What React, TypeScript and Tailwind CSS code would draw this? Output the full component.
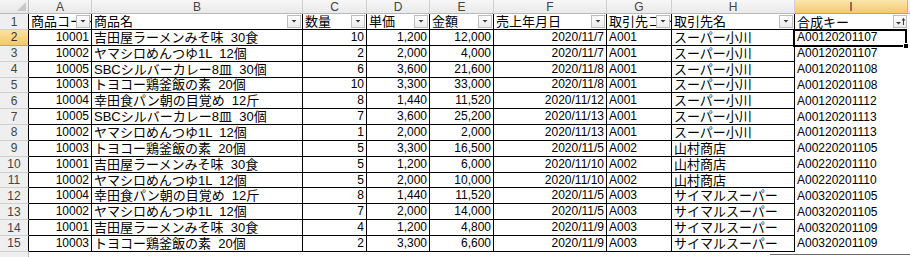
import * as React from "react";

const GRID =
  "grid grid-cols-[29px_63px_211px_64px_63px_64px_113px_65px_123px_113px_1fr]";

const LETTERS = ["A", "B", "C", "D", "E", "F", "G", "H", "I"];

const HEADERS = [
  "商品コード",
  "商品名",
  "数量",
  "単価",
  "金額",
  "売上年月日",
  "取引先コード",
  "取引先名",
  "合成キー",
];

// true = right aligned (numbers)
const RIGHT = [true, false, true, true, true, true, false, false, false];

const ROWS: string[][] = [
  ["10001", "吉田屋ラーメンみそ味  30食", "10", "1,200", "12,000", "2020/11/7", "A001", "スーパー小川", "A00120201107"],
  ["10002", "ヤマシロめんつゆ1L  12個", "2", "2,000", "4,000", "2020/11/7", "A001", "スーパー小川", "A00120201107"],
  ["10005", "SBCシルバーカレー8皿  30個", "6", "3,600", "21,600", "2020/11/8", "A001", "スーパー小川", "A00120201108"],
  ["10003", "トヨコー鶏釜飯の素  20個", "10", "3,300", "33,000", "2020/11/8", "A001", "スーパー小川", "A00120201108"],
  ["10004", "幸田食パン朝の目覚め  12斤", "8", "1,440", "11,520", "2020/11/12", "A001", "スーパー小川", "A00120201112"],
  ["10005", "SBCシルバーカレー8皿  30個", "7", "3,600", "25,200", "2020/11/13", "A001", "スーパー小川", "A00120201113"],
  ["10002", "ヤマシロめんつゆ1L  12個", "1", "2,000", "2,000", "2020/11/13", "A001", "スーパー小川", "A00120201113"],
  ["10003", "トヨコー鶏釜飯の素  20個", "5", "3,300", "16,500", "2020/11/5", "A002", "山村商店", "A00220201105"],
  ["10001", "吉田屋ラーメンみそ味  30食", "5", "1,200", "6,000", "2020/11/10", "A002", "山村商店", "A00220201110"],
  ["10002", "ヤマシロめんつゆ1L  12個", "5", "2,000", "10,000", "2020/11/10", "A002", "山村商店", "A00220201110"],
  ["10004", "幸田食パン朝の目覚め  12斤", "8", "1,440", "11,520", "2020/11/5", "A003", "サイマルスーパー", "A00320201105"],
  ["10002", "ヤマシロめんつゆ1L  12個", "7", "2,000", "14,000", "2020/11/5", "A003", "サイマルスーパー", "A00320201105"],
  ["10001", "吉田屋ラーメンみそ味  30食", "4", "1,200", "4,800", "2020/11/9", "A003", "サイマルスーパー", "A00320201109"],
  ["10003", "トヨコー鶏釜飯の素  20個", "2", "3,300", "6,600", "2020/11/9", "A003", "サイマルスーパー", "A00320201109"],
];

function FilterButton({ sorted }: { sorted?: boolean }) {
  return (
    <span className="absolute right-[1px] top-[1px] flex h-[13px] w-[14px] items-center justify-center border border-[#bdbdbd] bg-gradient-to-b from-[#ffffff] to-[#ebebeb]">
      {sorted ? (
        <svg width="12" height="11" viewBox="0 0 12 11">
          <polygon points="2,6 7,6 4.5,8.5" fill="#3c3c3c" />
          <line x1="9.5" y1="2.5" x2="9.5" y2="9" stroke="#3c3c3c" strokeWidth="1" />
          <polygon points="7.5,4.5 9.5,2 11.5,4.5" fill="#3c3c3c" />
        </svg>
      ) : (
        <svg width="12" height="11" viewBox="0 0 12 11">
          <polygon points="3.5,4 8.5,4 6,6.5" fill="#3c3c3c" />
        </svg>
      )}
    </span>
  );
}

function ColumnHeader() {
  return (
    <div className={`${GRID} h-[14px]`}>
      <div className="relative border-r border-b border-[#b9b9b9] bg-gradient-to-b from-[#f5f5f5] to-[#e7e7e7]">
        <svg className="absolute bottom-[2px] right-[2px]" width="9" height="9" viewBox="0 0 9 9">
          <polygon points="9,0 9,9 0,9" fill="#c8c8c8" />
        </svg>
      </div>
      {LETTERS.map((l) =>
        l === "I" ? (
          <div
            key={l}
            className="flex items-center justify-center border-r border-b border-r-[#e0b060] border-b-[#e69b2e] bg-gradient-to-b from-[#fbe6ae] to-[#f4c96a] text-[12px] leading-none text-[#333]"
          >
            {l}
          </div>
        ) : (
          <div
            key={l}
            className="flex items-center justify-center border-r border-b border-r-[#cfcfcf] border-b-[#b9b9b9] bg-gradient-to-b from-[#f7f7f7] to-[#e9e9e9] text-[12px] leading-none text-[#444]"
          >
            {l}
          </div>
        )
      )}
      <div className="border-b border-[#b9b9b9] bg-gradient-to-b from-[#f7f7f7] to-[#e9e9e9]" />
    </div>
  );
}

function RowHeader({ n, active }: { n: number; active?: boolean }) {
  return (
    <div
      className={
        active
          ? "flex items-center justify-center border-r border-b border-r-black border-b-[#e69b2e] bg-gradient-to-b from-[#fbe2a2] to-[#f5c865] text-[12px] leading-none text-[#333]"
          : "flex items-center justify-center border-r border-b border-r-black border-b-[#cfcfcf] bg-[#efefef] text-[12px] leading-none text-[#444]"
      }
    >
      {n}
    </div>
  );
}

function TitleRow() {
  return (
    <div className={`${GRID} h-[16px]`}>
      <RowHeader n={1} />
      {HEADERS.map((h, i) => (
        <div
          key={h}
          className={
            i === 8
              ? "relative flex items-center overflow-hidden pl-[2px]"
              : "relative flex items-center overflow-hidden border-r border-b border-black pl-[2px]"
          }
        >
          <span className="min-w-0 overflow-hidden whitespace-nowrap text-[13px] leading-[15px]">{h}</span>
          <FilterButton sorted={i === 8} />
        </div>
      ))}
      <div />
    </div>
  );
}

function DataRow({ row, n }: { row: string[]; n: number }) {
  const active = n === 2;
  return (
    <div className={`${GRID} h-[15.85px]`}>
      <RowHeader n={n} active={active} />
      {row.map((v, i) => {
        const big = i === 1 || i === 7;
        const size = big ? "text-[13px]" : "text-[12px]";
        if (i === 8) {
          return (
            <div key={i} className="relative flex items-center overflow-visible pl-[2px]">
              <span className={`whitespace-pre ${size} leading-[15px]`}>{v}</span>
              {active && (
                <>
                  <span className="pointer-events-none absolute -left-[2px] -top-[1px] bottom-[-1px] right-[1px] border-2 border-black" />
                  <span className="absolute bottom-[-3px] right-[-1px] h-[6px] w-[6px] border border-white bg-black" />
                </>
              )}
            </div>
          );
        }
        return (
          <div
            key={i}
            className={
              RIGHT[i]
                ? "flex items-center justify-end overflow-hidden border-r border-b border-black pr-[2px]"
                : "flex items-center overflow-hidden border-r border-b border-black pl-[2px]"
            }
          >
            <span className={`whitespace-pre ${size} leading-[15px]`}>{v}</span>
          </div>
        );
      })}
      <div />
    </div>
  );
}

export default function App() {
  return (
    <div className="relative h-[257px] w-[910px] overflow-hidden bg-white font-['Liberation_Sans','Noto_Sans_CJK_JP',sans-serif] text-black">
      <ColumnHeader />
      <TitleRow />
      {ROWS.map((r, idx) => (
        <DataRow key={idx} row={r} n={idx + 2} />
      ))}
      <div className={`${GRID} h-[8px]`}>
        <div className="border-r border-[#b9b9b9] bg-[#efefef]" />
      </div>
      <div className="absolute left-[770px] top-[254px] h-px w-[140px] bg-[#6b6b6b]" />
    </div>
  );
}
